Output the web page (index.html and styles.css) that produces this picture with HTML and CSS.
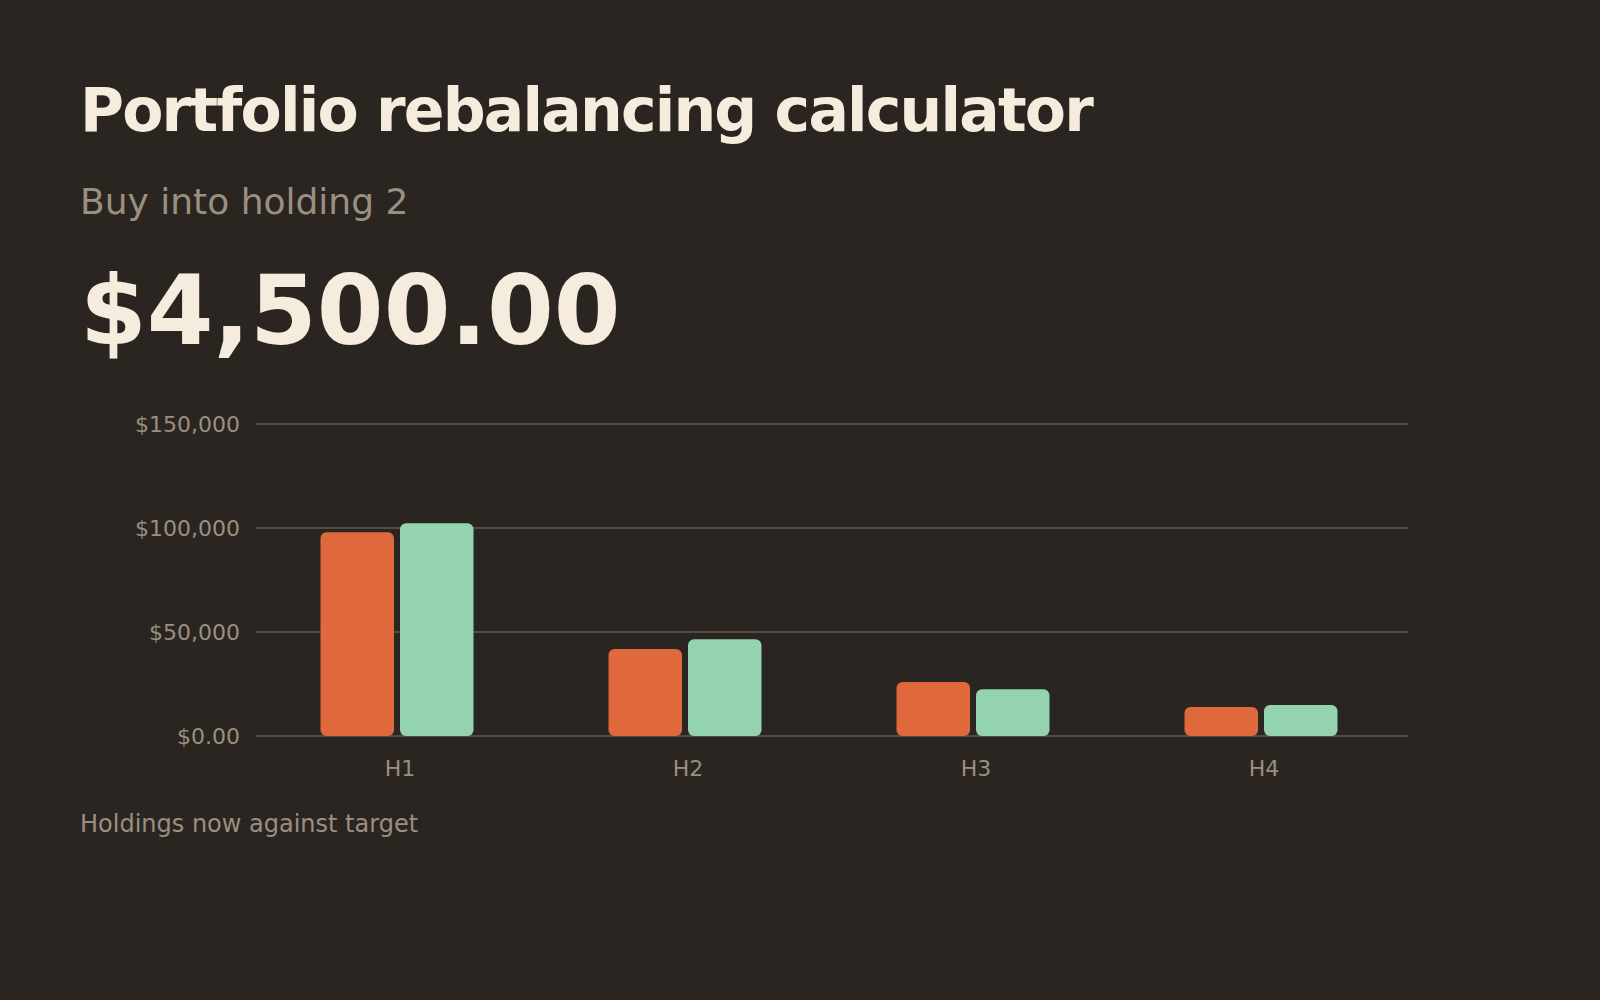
FILE: index.html
```html
<!DOCTYPE html>
<html lang="en">
<head>
<meta charset="utf-8">
<title>Portfolio rebalancing calculator</title>
<link rel="stylesheet" href="styles.css">
</head>
<body>
<main class="page">
  <h1 class="title">Portfolio rebalancing calculator</h1>
  <p class="subtitle">Buy into holding 2</p>
  <p class="amount">$4,500.00</p>
  <figure class="chart">
    <svg class="chart-svg" width="1440" height="400" viewBox="0 0 1440 400" role="img" aria-label="Holdings now against target">
      <g class="grid">
        <line x1="176" x2="1328" y1="32" y2="32"></line>
        <line x1="176" x2="1328" y1="136" y2="136"></line>
        <line x1="176" x2="1328" y1="240" y2="240"></line>
        <line x1="176" x2="1328" y1="344" y2="344"></line>
      </g>
      <g class="y-labels">
        <text x="160" y="40">$150,000</text>
        <text x="160" y="144">$100,000</text>
        <text x="160" y="248">$50,000</text>
        <text x="160" y="352">$0.00</text>
      </g>
      <g class="bars-now">
        <rect x="240.5" y="140.3" width="73.5" height="203.7" rx="6"></rect>
        <rect x="528.5" y="257" width="73.5" height="87" rx="6"></rect>
        <rect x="816.5" y="290" width="73.5" height="54" rx="6"></rect>
        <rect x="1104.5" y="315" width="73.5" height="29" rx="6"></rect>
      </g>
      <g class="bars-target">
        <rect x="320" y="131.3" width="73.5" height="212.7" rx="6"></rect>
        <rect x="608" y="247.3" width="73.5" height="96.7" rx="6"></rect>
        <rect x="896" y="297.3" width="73.5" height="46.7" rx="6"></rect>
        <rect x="1184" y="313" width="73.5" height="31" rx="6"></rect>
      </g>
      <g class="x-labels">
        <text x="320" y="384">H1</text>
        <text x="608" y="384">H2</text>
        <text x="896" y="384">H3</text>
        <text x="1184" y="384">H4</text>
      </g>
    </svg>
    <figcaption class="caption">Holdings now against target</figcaption>
  </figure>
</main>
</body>
</html>
```

FILE: styles.css
```css
html, body {
  margin: 0;
  padding: 0;
  background: #2a2520;
}

body {
  font-family: "DejaVu Sans", "Liberation Sans", sans-serif;
  color: #f5ecdd;
  width: 1600px;
  height: 1000px;
  overflow: hidden;
}

.page {
  padding: 75px 80px 0 80px;
  display: flex;
  flex-direction: column;
}

.title {
  margin: 0;
  font-size: 60px;
  line-height: 70px;
  font-weight: 700;
  letter-spacing: -1.8px;
  color: #f5ecdd;
}

.subtitle {
  margin: 35px 0 0 0;
  font-size: 36px;
  line-height: 44px;
  color: #9a8f80;
}

.amount {
  margin: 31px 0 0 0;
  font-size: 96px;
  line-height: 112px;
  font-weight: 700;
  color: #f5ecdd;
}

.chart {
  margin: 25px 0 0 0;
  display: flex;
  flex-direction: column;
}

.chart-svg {
  display: block;
}

.grid line {
  stroke: #5f584e;
  stroke-width: 1.5;
}

.y-labels text {
  font-family: "DejaVu Sans", sans-serif;
  font-size: 22px;
  fill: #9a8f80;
  text-anchor: end;
}

.x-labels text {
  font-family: "DejaVu Sans", sans-serif;
  font-size: 22px;
  fill: #9a8f80;
  text-anchor: middle;
}

.bars-now rect {
  fill: #e0683d;
}

.bars-target rect {
  fill: #93d3b0;
}

.caption {
  margin: 18px 0 0 0;
  font-size: 24px;
  line-height: 28px;
  color: #9a8f80;
}
```
